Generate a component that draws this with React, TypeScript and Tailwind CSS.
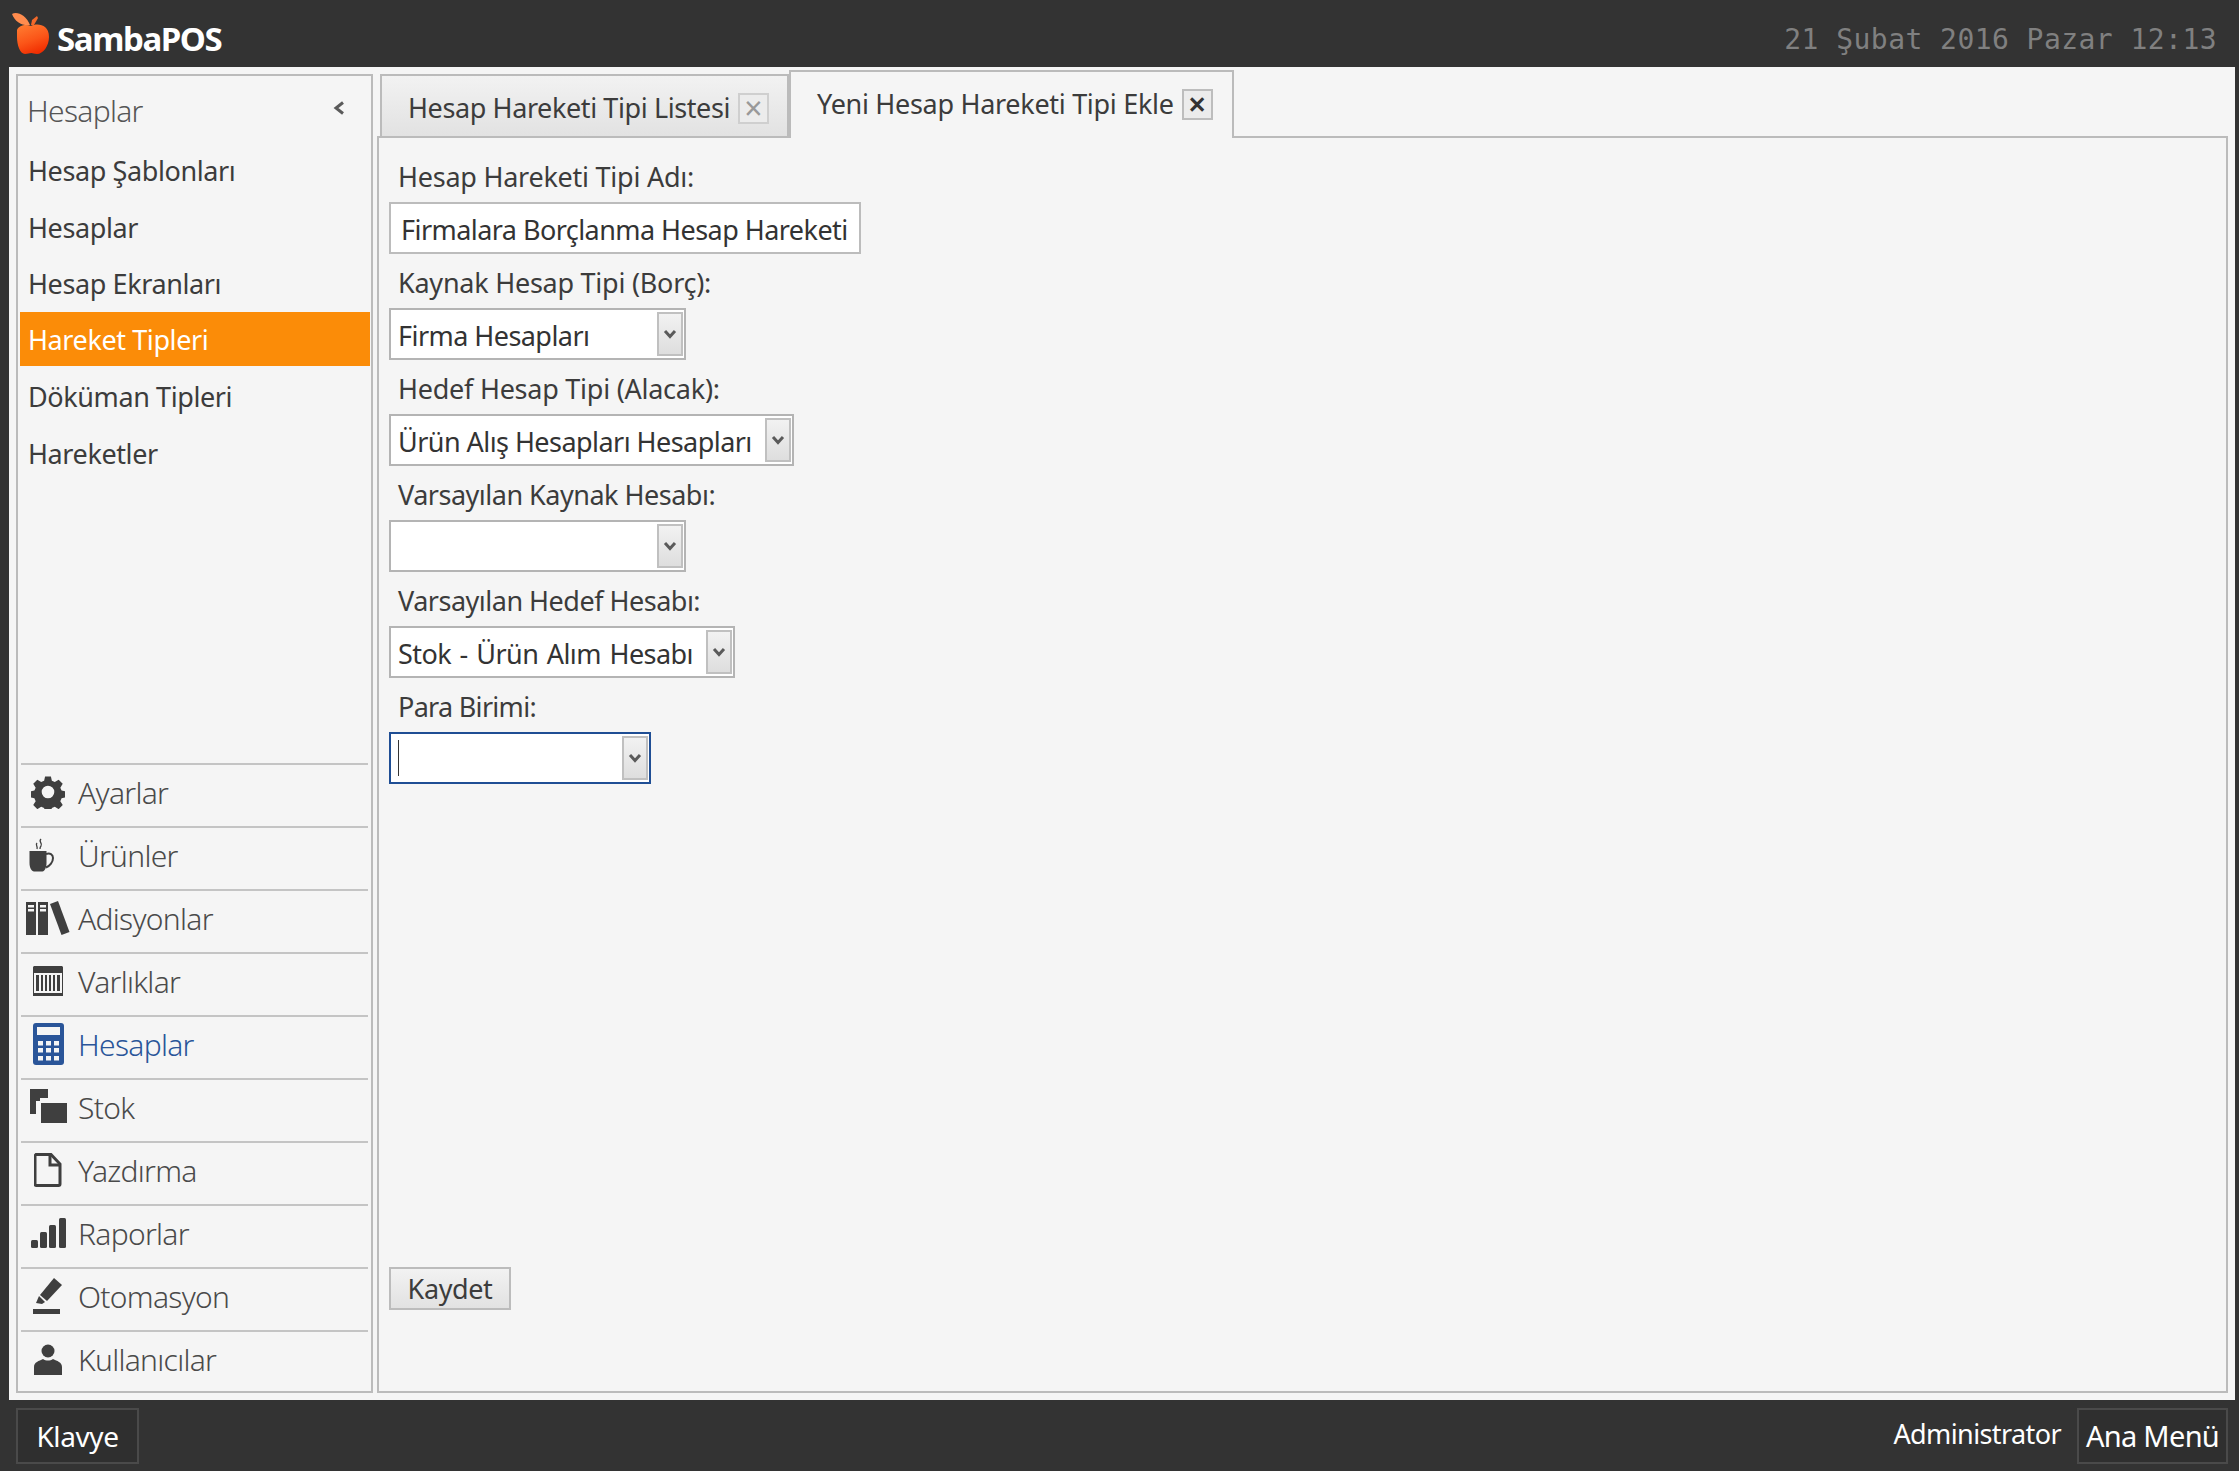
import type { ReactNode } from 'react'

const ui = "font-['Noto_Sans',sans-serif]"

function Apple() {
  return (
    <svg width="37" height="43" viewBox="0 0 37 43" className="shrink-0">
      <defs>
        <linearGradient id="apple" x1="0.2" y1="0" x2="0.6" y2="1">
          <stop offset="0" stopColor="#ff7a30" />
          <stop offset="0.55" stopColor="#fb5518" />
          <stop offset="1" stopColor="#f02c00" />
        </linearGradient>
      </defs>
      <path d="M5 18 C7 13 14 12 19 14 C25 11 37 12 37 25 C37 34 31 42 25 42 C22 42 21 41 19.500 41 C17 41 16 42 13 42 C8 42 5 33 5 25 Z" fill="url(#apple)" />
      <path d="M0 2 C5 -1 14 3 18 13 C10 14 3 10 0 2 Z" fill="#ff8c4e" />
      <path d="M19 13 L20 8 L25 4 L26 6 L22 13 Z" fill="#f2692a" />
    </svg>
  )
}

function Gear() {
  return (
    <svg width="34" height="34" viewBox="0 0 34 34" fill="#3f3f3f">
      <path fillRule="evenodd" d="M14 1h6l1 4.500 3 1.300 4-2.500 4.200 4.200-2.500 4 1.300 3 4.500 1v6l-4.500 1-1.300 3 2.500 4-4.200 4.200-4-2.500-3 1.300-1 4.500h-6l-1-4.500-3-1.300-4 2.500-4.200-4.200 2.500-4-1.300-3-4.500-1v-6l4.500-1 1.300-3-2.500-4L6 4.300l4 2.500 3-1.300z M17 10.500a6.500 6.500 0 1 0 0 13 6.500 6.500 0 0 0 0-13z" transform="translate(0.500 0.500) scale(0.97)" />
    </svg>
  )
}

function Cup() {
  return (
    <svg width="25" height="34" viewBox="0 0 25 34" fill="#3f3f3f" className="mr-[13px]">
      <path d="M0.500 13h17v12c0 5-2 8-4 8.500H5C2.500 33 0.500 30 0.500 25z" />
      <path d="M17 16c4-1.500 7 .5 7 4 0 4-3 8-7 9.500" fill="none" stroke="#3f3f3f" strokeWidth="2" />
      <path d="M12 1c-3 3 2 4 0 7-1 1-1 2-1 3M8 5c-2 2 1 3 0 6" fill="none" stroke="#3f3f3f" strokeWidth="1.300" />
    </svg>
  )
}

function Books() {
  return (
    <svg width="44" height="34" viewBox="0 0 44 34" fill="#3f3f3f">
      <path fillRule="evenodd" d="M0 1h10v33H0z M2 4v2.500h6V4z M2 8v2.500h6V8z" />
      <path fillRule="evenodd" d="M12 1h10v33H12z M14 4v2.500h6V4z M14 8v2.500h6V8z" />
      <path d="M24 3l8-3 11.500 31-8 3z" />
    </svg>
  )
}

function Till() {
  return (
    <svg width="30" height="30" viewBox="0 0 30 30">
      <rect x="0.500" y="0.500" width="29" height="29" rx="1.500" fill="#f5f5f5" stroke="#3f3f3f" />
      <rect x="0" y="0" width="30" height="7" rx="1.500" fill="#3f3f3f" />
      <rect x="0" y="27" width="30" height="3" fill="#3f3f3f" />
      <rect x="3" y="9" width="3" height="16" fill="#3f3f3f" />
      <rect x="8" y="9" width="2" height="16" fill="#3f3f3f" />
      <rect x="12" y="9" width="2" height="16" fill="#3f3f3f" />
      <rect x="16" y="9" width="2" height="16" fill="#3f3f3f" />
      <rect x="20" y="9" width="2" height="16" fill="#3f3f3f" />
      <rect x="24" y="9" width="3" height="16" fill="#3f3f3f" />
    </svg>
  )
}

function Calc() {
  return (
    <svg width="31" height="42" viewBox="0 0 31 42">
      <rect width="31" height="42" rx="3" fill="#2a5599" />
      <rect x="4" y="4" width="23" height="8" fill="#f5f5f5" />
      {[5, 13, 21].flatMap((x) =>
        [18, 25, 33].map((y) => <rect key={`${x}-${y}`} x={x} y={y} width="5" height="4.500" fill="#f5f5f5" />)
      )}
    </svg>
  )
}

function Stack() {
  return (
    <svg width="37" height="36" viewBox="0 0 37 36" fill="#3f3f3f">
      <path d="M0 0h18v9H10v3H6v13H0z" />
      <rect x="11" y="14" width="26" height="20" />
    </svg>
  )
}

function Doc() {
  return (
    <svg width="28" height="34" viewBox="0 0 28 34">
      <path d="M2 1.500h15l9 9.500v20a1.500 1.500 0 0 1-1.500 1.500h-22A1.500 1.500 0 0 1 1 31V2.500z" fill="none" stroke="#3f3f3f" strokeWidth="3" />
      <path d="M16 2v10h10" fill="none" stroke="#3f3f3f" strokeWidth="3" />
    </svg>
  )
}

function Bars() {
  return (
    <svg width="35" height="30" viewBox="0 0 35 30" fill="#3f3f3f">
      <rect x="0" y="22" width="7" height="8" rx="1.500" />
      <rect x="9" y="14" width="7" height="16" rx="1.500" />
      <rect x="18" y="7" width="7" height="23" rx="1.500" />
      <rect x="28" y="0" width="7" height="30" rx="1.500" />
    </svg>
  )
}

function Marker() {
  return (
    <svg width="30" height="36" viewBox="0 0 30 36" fill="#3f3f3f">
      <path d="M21 0l8 7-15 16-7-6z" />
      <path d="M6 18l6 6-3 2-6-1z" />
      <rect x="0" y="31" width="27" height="5" />
    </svg>
  )
}

function Person() {
  return (
    <svg width="28" height="31" viewBox="0 0 28 31" fill="#3f3f3f">
      <circle cx="14" cy="7" r="6.500" />
      <path d="M0 31v-8c0-5 5-6 9-8 3 2 7 2 10 0 4 2 9 3 9 8v8z" />
    </svg>
  )
}

function SideNav({ icon, label, active }: { icon: ReactNode; label: string; active?: boolean }) {
  return (
    <div className="flex h-[63px] items-center border-t-2 border-[#c4c4c4] pb-[7px]">
      <div className="flex w-[57px] shrink-0 justify-center pr-[3px]">{icon}</div>
      <span className={`text-[30px] font-light tracking-[-0.7px] ${active ? 'text-[#2a5599]' : 'text-[#4a4a4a]'}`}>
        {label}
      </span>
    </div>
  )
}

function Chevron() {
  return (
    <svg width="14" height="11" viewBox="0 0 14 11" fill="none" stroke="#5a5a5a" strokeWidth="3">
      <path d="M2 2l5 5.500L12 2" />
    </svg>
  )
}

function Field({ children }: { children: ReactNode }) {
  return (
    <div className="flex h-[52px] w-[472px] items-center border-2 border-[#bcbcbc] bg-white pl-[10px] pt-[5px]">
      <span className="text-[27px] tracking-[-0.55px] text-[#333] whitespace-nowrap">{children}</span>
    </div>
  )
}

function Select({ value, width, focused, spaced }: { value?: string; width: string; focused?: boolean; spaced?: boolean }) {
  return (
    <div className={`flex h-[52px] items-center justify-between border-2 bg-white pl-[7px] pr-px ${width} ${focused ? 'border-[#1f4e94]' : 'border-[#b4b4b4]'}`}>
      {focused && <div className="h-[36px] w-px bg-[#333]" />}
      <span className={`mt-[5px] text-[27px] tracking-[-0.55px] text-[#333] whitespace-nowrap ${spaced ? '[word-spacing:2px]' : ''}`}>{value}</span>
      <div className="flex h-[44px] w-[26px] shrink-0 items-center justify-center border-2 border-[#c0c0c0] bg-gradient-to-b from-[#f2f2f2] to-[#dedede]">
        <Chevron />
      </div>
    </div>
  )
}

function Label({ children, tight }: { children: ReactNode; tight?: string }) {
  return <div className={`flex h-[54px] items-center pl-[9px] pt-[5px] text-[27px] text-[#3c3c3c] whitespace-nowrap ${tight ?? 'tracking-[-0.25px]'}`}>{children}</div>
}

const menu = ['Hesap Şablonları', 'Hesaplar', 'Hesap Ekranları', 'Hareket Tipleri', 'Döküman Tipleri', 'Hareketler']

export default function App() {
  return (
    <div className={`flex h-[1471px] w-[2239px] flex-col overflow-hidden bg-[#333333] ${ui}`}>
      <header className="flex h-[67px] shrink-0 items-center justify-between pl-[12px] pr-[22px]">
        <div className="flex items-center gap-[8px]">
          <Apple />
          <span className="mt-[10px] text-[33px] font-bold tracking-[-1.4px] text-white">SambaPOS</span>
        </div>
        <span className="mt-[12px] font-['DejaVu_Sans_Mono',monospace] text-[28px] tracking-[0.450px] text-[#808080] whitespace-nowrap">
          21 Şubat 2016 Pazar 12:13
        </span>
      </header>

      <main className="ml-[9px] mr-[4px] flex h-[1333px] shrink-0 gap-[4px] bg-[#f5f5f5] p-[7px]">
        <aside className="flex w-[357px] shrink-0 flex-col border-2 border-[#bbbbbb] pl-[2px] pr-px">
          <div className="flex h-[66px] shrink-0 items-center justify-between pl-[7px] pr-[25px] pt-[3px]">
            <span className="text-[30px] font-light tracking-[-0.7px] text-[#555]">Hesaplar</span>
            <svg width="12" height="14" viewBox="0 0 12 14" fill="none" stroke="#5a5a5a" strokeWidth="3" className="-mt-[6px]">
              <path d="M10 1.500L3 7l7 5.500" />
            </svg>
          </div>
          {menu.map((m) =>
            m === 'Hareket Tipleri' ? (
              <div key={m} className="mb-[2.500px] flex h-[54px] shrink-0 items-center bg-[#fb8c08] pl-[8px] pt-[3px] text-[27px] tracking-[-0.4px] text-white">
                {m}
              </div>
            ) : (
              <div key={m} className="flex h-[56.500px] shrink-0 items-center pl-[8px] pt-[2px] text-[27px] tracking-[-0.4px] text-[#3c3c3c]">
                {m}
              </div>
            )
          )}
          <div className="-mb-[2px] mt-auto pl-px pr-[2px]">
            <SideNav icon={<Gear />} label="Ayarlar" />
            <SideNav icon={<Cup />} label="Ürünler" />
            <SideNav icon={<Books />} label="Adisyonlar" />
            <SideNav icon={<Till />} label="Varlıklar" />
            <SideNav icon={<Calc />} label="Hesaplar" active />
            <SideNav icon={<Stack />} label="Stok" />
            <SideNav icon={<Doc />} label="Yazdırma" />
            <SideNav icon={<Bars />} label="Raporlar" />
            <SideNav icon={<Marker />} label="Otomasyon" />
            <SideNav icon={<Person />} label="Kullanıcılar" />
          </div>
        </aside>

        <section className="flex min-w-0 flex-1 flex-col">
          <div className="-mt-[4px] flex h-[66px] shrink-0 items-end pl-[3px]">
            <div className="flex h-[62px] w-[409px] items-center gap-[8px] border-2 border-b-0 border-[#bbbbbb] bg-gradient-to-b from-[#f2f2f2] to-[#e2e2e2] pl-[26px] pt-[4px]">
              <span className="text-[27px] tracking-[-0.4px] text-[#3c3c3c] whitespace-nowrap">Hesap Hareketi Tipi Listesi</span>
              <div className="flex h-[31px] w-[31px] shrink-0 items-center justify-center border-2 border-[#cfcfcf] bg-[#ececec] text-[32px] leading-none text-[#999]">×</div>
            </div>
            <div className="relative z-10 -mb-[2px] flex h-[68px] w-[445px] items-center gap-[8px] border-2 border-b-0 border-[#bbbbbb] bg-[#f5f5f5] pb-[2px] pl-[26px]">
              <span className="text-[27px] tracking-[-0.3px] text-[#3c3c3c] whitespace-nowrap">Yeni Hesap Hareketi Tipi Ekle</span>
              <div className="flex h-[31px] w-[31px] shrink-0 items-center justify-center border-2 border-[#bdbdbd] bg-[#ececec] text-[32px] font-semibold leading-none text-[#333]">×</div>
            </div>
          </div>
          <div className="flex flex-1 flex-col border-2 border-[#bbbbbb] pb-[81px] pl-[10px] pt-[10px]">
            <Label>Hesap Hareketi Tipi Adı:</Label>
            <Field>Firmalara Borçlanma Hesap Hareketi</Field>
            <Label>Kaynak Hesap Tipi (Borç):</Label>
            <Select value="Firma Hesapları" width="w-[297px]" />
            <Label>Hedef Hesap Tipi (Alacak):</Label>
            <Select value="Ürün Alış Hesapları Hesapları" width="w-[405px]" />
            <Label tight="tracking-[-0.5px]">Varsayılan Kaynak Hesabı:</Label>
            <Select width="w-[297px]" />
            <Label tight="tracking-[-0.5px]">Varsayılan Hedef Hesabı:</Label>
            <Select value="Stok - Ürün Alım Hesabı" width="w-[346px]" spaced />
            <Label tight="tracking-[-0.7px]">Para Birimi:</Label>
            <Select width="w-[262px]" focused />
            <button className="mt-auto flex h-[43px] w-[122px] items-center justify-center border-2 border-[#bcbcbc] bg-gradient-to-b from-[#f2f2f2] to-[#e2e2e2] pt-[2px] text-[27px] tracking-[-0.4px] text-[#3c3c3c]">
              Kaydet
            </button>
          </div>
        </section>
      </main>

      <footer className="flex flex-1 items-center justify-between pl-[16px] pr-[11px]">
        <button className="flex h-[56px] w-[123px] items-center justify-center border-2 border-[#4a4a4a] bg-[#2f2f2f] text-[28px] tracking-[-0.4px] text-white">Klavye</button>
        <div className="flex items-center gap-[16px]">
          <span className="-mt-[2px] text-[27px] tracking-[-0.6px] text-white">Administrator</span>
          <button className="flex h-[56px] w-[151px] items-center justify-center border-2 border-[#4a4a4a] bg-[#2f2f2f] text-[29px] tracking-[-0.7px] text-white">Ana Menü</button>
        </div>
      </footer>
    </div>
  )
}
